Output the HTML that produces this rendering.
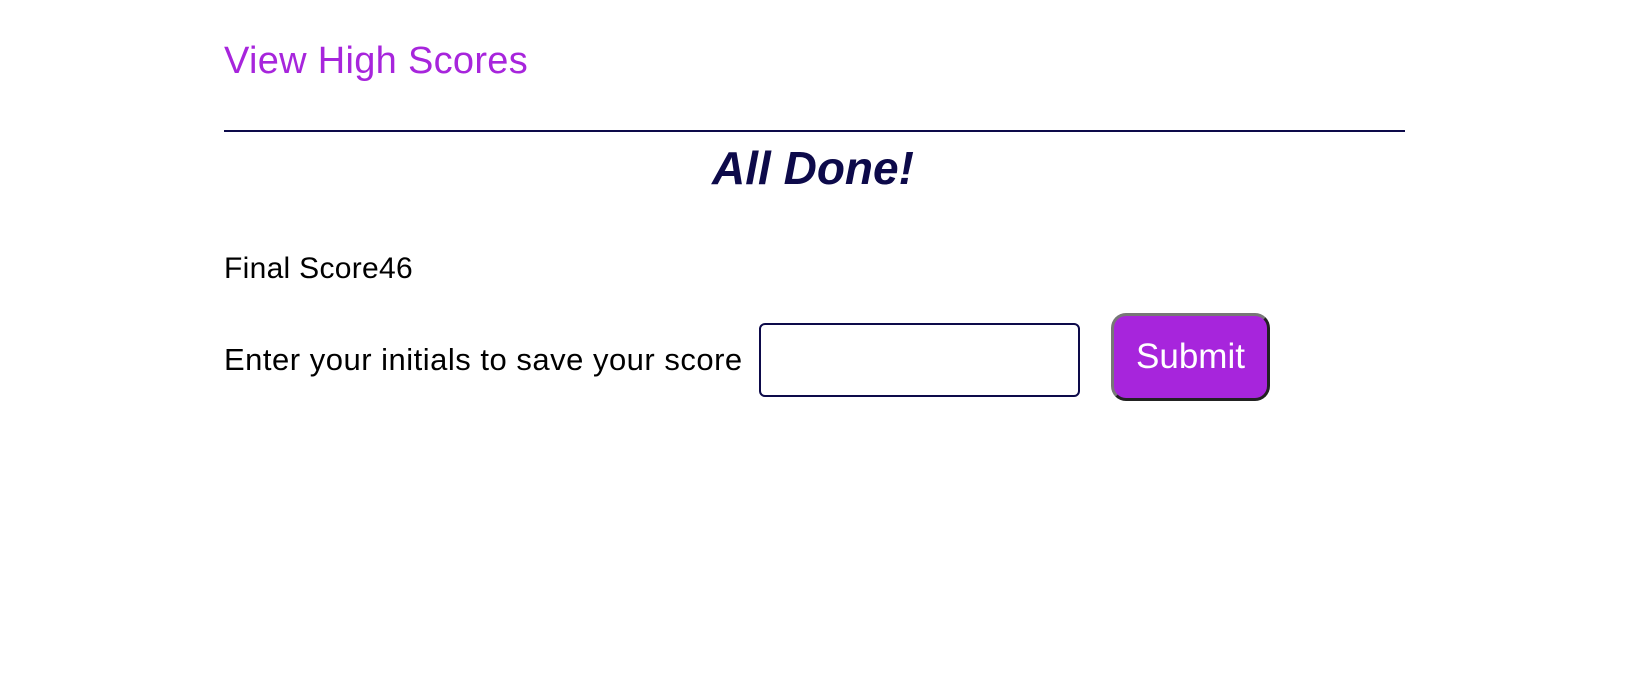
<!DOCTYPE html>
<html><head><meta charset="utf-8"><style>
body{margin:0;width:1642px;height:692px;background:#fff;font-family:"Liberation Sans",sans-serif;position:relative;overflow:hidden}
div,h1{line-height:1}
.a{position:absolute;left:224px;top:42px;font-size:38px;color:#a725dc;letter-spacing:0.3px}
.hr{position:absolute;left:224px;top:130px;width:1181px;height:2px;background:#0d0a4a}
h1{position:absolute;left:0;width:1626px;top:145px;margin:0;text-align:center;font-size:46px;font-weight:bold;font-style:italic;color:#0d0a4a}
.f{position:absolute;left:224px;top:254px;font-size:30px;color:#000;letter-spacing:0.3px}
.e{position:absolute;left:224px;top:344px;font-size:31px;color:#000;letter-spacing:0.5px}
.in{position:absolute;left:759px;top:323px;width:317px;height:70px;border:2px solid #0d0a4a;border-radius:6px}
.b{position:absolute;left:1111px;top:313px;width:153px;height:82px;background:#a725dc;border:3px solid;border-color:#777 #222 #222 #777;border-radius:15px;color:#fff;font-size:35px;text-align:center;line-height:82px}
</style></head><body>
<div class="a">View High Scores</div>
<div class="hr"></div>
<h1>All Done!</h1>
<div class="f">Final Score46</div>
<div class="e">Enter your initials to save your score</div>
<div class="in"></div>
<div class="b">Submit</div>
</body></html>
